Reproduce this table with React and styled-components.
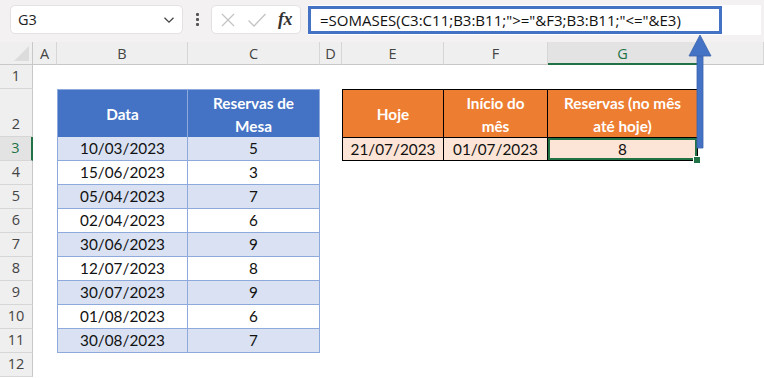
import styled, { createGlobalStyle } from "styled-components";

const GlobalStyle = createGlobalStyle`
  html, body {
    margin: 0;
    padding: 0;
    background: #fff;
    overflow: hidden;
  }
  * {
    box-sizing: border-box;
  }
`;

const Page = styled.div`
  position: relative;
  width: 764px;
  height: 378px;
  overflow: hidden;
  font-family: "Open Sans", "Noto Sans", sans-serif;
`;

/* ---------- formula toolbar ---------- */

const Toolbar = styled.div`
  display: flex;
  align-items: flex-start;
  height: 42px;
  padding: 5px 3px 0 10px;
  background: #f3f1f1;
`;

const NameBox = styled.div`
  display: flex;
  align-items: center;
  justify-content: space-between;
  width: 173px;
  height: 29px;
  padding: 0 7px 0 7px;
  background: #fff;
  border: 1px solid #e4e1e1;
  border-radius: 5px;
  font-size: 14.5px;
  color: #222;
`;

const Dots = styled.div`
  display: flex;
  flex-direction: column;
  align-items: center;
  justify-content: center;
  gap: 2px;
  width: 28px;
  height: 29px;

  span {
    width: 3px;
    height: 3px;
    background: #555;
    border-radius: 1px;
  }
`;

const FxBox = styled.div`
  display: flex;
  align-items: center;
  justify-content: space-between;
  width: 90px;
  height: 29px;
  padding: 0 8px 0 8px;
  margin-right: 7px;
  background: #fff;
  border: 1px solid #e4e1e1;
  border-radius: 5px;
`;

const Fx = styled.span`
  font-family: "Liberation Serif", "DejaVu Serif", serif;
  font-style: italic;
  font-weight: 700;
  font-size: 18px;
  color: #333;
  letter-spacing: -0.5px;
`;

const FormulaArea = styled.div`
  flex: 1;
  height: 30px;
  background: #fff;
`;

const FormulaBox = styled.div`
  display: flex;
  align-items: center;
  width: 414px;
  height: 28px;
  margin-top: 1px;
  padding-left: 9px;
  border: 3px solid #4472c4;
  font-size: 15px;
  color: #111;
  white-space: nowrap;
`;

/* ---------- sheet grid ---------- */

const Sheet = styled.div`
  display: grid;
  grid-template-columns: 33px 24px 131px 132px 22px 102px 104px 150px 1fr;
  grid-template-rows: 23px 24px 48px repeat(10, 24px);
`;

const Corner = styled.div`
  position: relative;
  background: #efefef;
  border-right: 1px solid #c8c8c8;
  border-bottom: 1px solid #c8c8c8;

  &::after {
    content: "";
    position: absolute;
    right: 3px;
    bottom: 3px;
    width: 0;
    height: 0;
    border-left: 15px solid transparent;
    border-bottom: 15px solid #dcdcdc;
  }
`;

const ColHead = styled.div`
  display: flex;
  align-items: center;
  justify-content: center;
  background: ${(p) => (p.$active ? "#e3e3e3" : "#efefef")};
  border-right: 1px solid #d6d6d6;
  border-bottom: ${(p) => (p.$active ? "2px solid #217346" : "1px solid #c8c8c8")};
  color: ${(p) => (p.$active ? "#217346" : "#444")};
  font-size: 14.5px;
  padding-top: ${(p) => (p.$active ? "1px" : "0")};
`;

const RowHead = styled.div`
  display: flex;
  align-items: flex-end;
  justify-content: center;
  padding-bottom: 1px;
  background: ${(p) => (p.$active ? "#e3e3e3" : "#efefef")};
  border-bottom: 1px solid #d6d6d6;
  border-right: ${(p) => (p.$active ? "2px solid #217346" : "1px solid #c8c8c8")};
  color: ${(p) => (p.$active ? "#217346" : "#444")};
  font-size: 14.5px;
  line-height: 22px;
`;

const Cell = styled.div`
  background: #fff;
`;

const DataText = styled.div`
  display: flex;
  align-items: center;
  justify-content: center;
  text-align: center;
  font-family: Lato, "Liberation Sans", sans-serif;
  font-size: 15.3px;
  line-height: 23.5px;
  color: #111;
`;

const BlueHead = styled(DataText)`
  padding-top: 3px;
  background: #4472c4;
  color: #fff;
  font-weight: 700;
  border-top: 1px solid #8ea9db;
  border-right: 1px solid #8ea9db;
  border-left: ${(p) => (p.$first ? "1px solid #8ea9db" : "none")};
`;

const BlueCell = styled(DataText)`
  padding-top: 1px;
  background: ${(p) => (p.$band ? "#d9e1f2" : "#fff")};
  border-bottom: 1px solid #8ea9db;
  border-right: 1px solid #8ea9db;
  border-left: ${(p) => (p.$first ? "1px solid #8ea9db" : "none")};
`;

const OrangeHead = styled(DataText)`
  padding-top: 3px;
  background: #ed7d31;
  color: #fff;
  font-weight: 700;
  border-top: 1px solid #000;
  border-right: 1px solid #000;
  border-left: ${(p) => (p.$first ? "1px solid #000" : "none")};
`;

const OrangeCell = styled(DataText)`
  position: relative;
  padding-top: 1px;
  background: #fce4d6;
  border-top: 1px solid #000;
  border-bottom: 1px solid #000;
  border-right: 1px solid #000;
  border-left: ${(p) => (p.$first ? "1px solid #000" : "none")};
  box-shadow: ${(p) => (p.$selected ? "inset 0 0 0 2px #217346" : "none")};

  &::after {
    content: "";
    display: ${(p) => (p.$selected ? "block" : "none")};
    position: absolute;
    right: -4px;
    bottom: -4px;
    width: 6px;
    height: 6px;
    background: #217346;
    border: 1px solid #fff;
  }
`;

const Arrow = styled.svg`
  position: absolute;
  left: 686px;
  top: 34px;
  pointer-events: none;
`;

const columns = ["A", "B", "C", "D", "E", "F", "G", "H"];

const bookings = [
  ["10/03/2023", 5],
  ["15/06/2023", 3],
  ["05/04/2023", 7],
  ["02/04/2023", 6],
  ["30/06/2023", 9],
  ["12/07/2023", 8],
  ["30/07/2023", 9],
  ["01/08/2023", 6],
  ["30/08/2023", 7],
];

function renderCell(row, col) {
  const key = `${col}${row}`;

  // blue table (B:C)
  if (row === 2 && col === "B")
    return <BlueHead key={key} $first>Data</BlueHead>;
  if (row === 2 && col === "C")
    return (
      <BlueHead key={key}>
        Reservas de
        <br />
        Mesa
      </BlueHead>
    );
  if (row >= 3 && row <= 11 && (col === "B" || col === "C")) {
    const [date, n] = bookings[row - 3];
    return (
      <BlueCell key={key} $band={row % 2 === 1} $first={col === "B"}>
        {col === "B" ? date : n}
      </BlueCell>
    );
  }

  // orange table (E:G)
  if (row === 2 && col === "E")
    return <OrangeHead key={key} $first>Hoje</OrangeHead>;
  if (row === 2 && col === "F")
    return (
      <OrangeHead key={key}>
        Início do
        <br />
        mês
      </OrangeHead>
    );
  if (row === 2 && col === "G")
    return (
      <OrangeHead key={key}>
        Reservas (no mês
        <br />
        até hoje)
      </OrangeHead>
    );
  if (row === 3 && col === "E")
    return <OrangeCell key={key} $first>21/07/2023</OrangeCell>;
  if (row === 3 && col === "F")
    return <OrangeCell key={key}>01/07/2023</OrangeCell>;
  if (row === 3 && col === "G")
    return <OrangeCell key={key} $selected>8</OrangeCell>;

  return <Cell key={key} />;
}

export default function App() {
  const rows = Array.from({ length: 12 }, (_, i) => i + 1);

  return (
    <Page>
      <GlobalStyle />

      {/* formula bar */}
      <Toolbar>
        <NameBox>
          <span>G3</span>
          <svg width="12" height="8" viewBox="0 0 12 8">
            <path d="M1.5 1.8 L6 6.2 L10.5 1.8" fill="none" stroke="#444" strokeWidth="1.3" />
          </svg>
        </NameBox>
        <Dots>
          <span />
          <span />
          <span />
        </Dots>
        <FxBox>
          <svg width="16" height="16" viewBox="0 0 16 16">
            <path d="M2 2 L14 14 M14 2 L2 14" stroke="#c4c4c4" strokeWidth="1.3" />
          </svg>
          <svg width="20" height="16" viewBox="0 0 20 16">
            <path d="M1.5 8.5 L7 14 L18.5 2" fill="none" stroke="#c4c4c4" strokeWidth="1.3" />
          </svg>
          <Fx>fx</Fx>
        </FxBox>
        <FormulaArea>
          <FormulaBox>=SOMASES(C3:C11;B3:B11;"&gt;="&amp;F3;B3:B11;"&lt;="&amp;E3)</FormulaBox>
        </FormulaArea>
      </Toolbar>

      {/* worksheet */}
      <Sheet>
        <Corner />
        {columns.map((c) => (
          <ColHead key={c} $active={c === "G"}>
            {c === "H" ? "" : c}
          </ColHead>
        ))}
        {rows.map((r) => [
          <RowHead key={`r${r}`} $active={r === 3}>
            {r}
          </RowHead>,
          ...columns.map((c) => renderCell(r, c)),
        ])}
      </Sheet>

      {/* callout arrow to the formula */}
      <Arrow width="30" height="120" viewBox="0 0 30 120">
        <path d="M11 20 L17 20 L17 114 L11 114 Z" fill="#4472c4" stroke="#3a63ad" strokeWidth="0.8" />
        <path d="M14 1 L25 22 L3 22 Z" fill="#4472c4" stroke="#3a63ad" strokeWidth="0.8" />
      </Arrow>
    </Page>
  );
}
